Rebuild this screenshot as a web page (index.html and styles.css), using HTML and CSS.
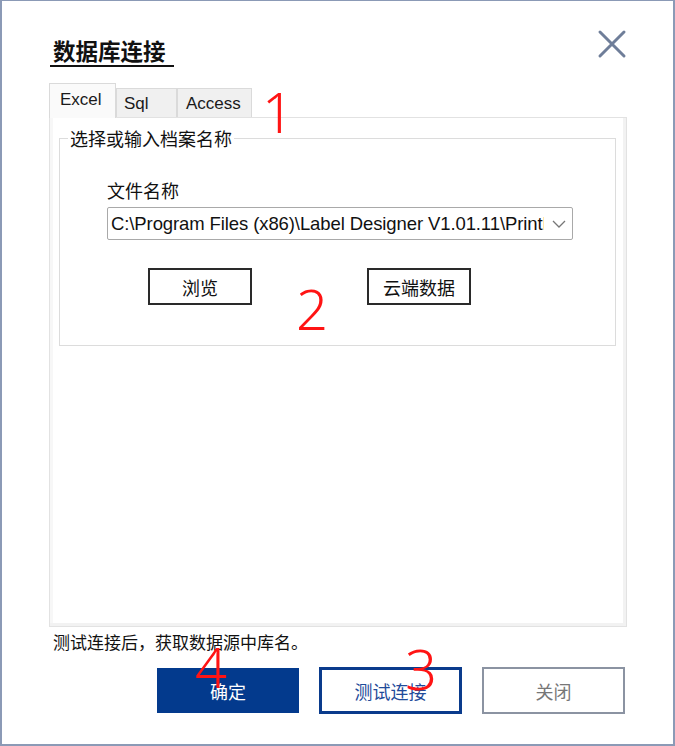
FILE: index.html
```html
<!DOCTYPE html>
<html lang="zh-CN">
<head>
  <meta charset="UTF-8">
  <meta name="viewport" content="width=device-width, initial-scale=1.0">
  <title>数据库连接</title>
  <link rel="stylesheet" href="styles.css">
</head>
<body>
  <div class="window">
    <div class="header">
      <div class="title">数据库连接</div>
      <svg class="close" width="30" height="30" viewBox="0 0 30 30">
        <path d="M3 3 L27 27 M27 3 L3 27" />
      </svg>
    </div>

    <div class="tabs">
      <div class="tab active">Excel</div>
      <div class="tab tab-sql">Sql</div>
      <div class="tab tab-access">Access</div>
    </div>

    <div class="panel">
      <fieldset class="group">
        <legend>选择或输入档案名称</legend>
        <div class="group-body">
          <div class="field-label">文件名称</div>
          <div class="combo">
            <span class="combo-text">C:\Program Files (x86)\Label Designer V1.01.11\PrintFiles\data.xlsx</span>
            <svg class="chevron" width="14" height="8" viewBox="0 0 14 8">
              <path d="M1 1 L7 7 L13 1" />
            </svg>
          </div>
          <div class="group-buttons">
            <button class="btn-plain">浏览</button>
            <button class="btn-plain">云端数据</button>
          </div>
        </div>
      </fieldset>
    </div>

    <div class="status">测试连接后，获取数据源中库名。</div>

    <div class="footer">
      <button class="btn btn-primary">确定</button>
      <button class="btn btn-outline">测试连接</button>
      <button class="btn btn-disabled">关闭</button>
    </div>

    <!-- annotation marks -->
    <span class="mark mark-1">1</span>
    <span class="mark mark-2">2</span>
    <span class="mark mark-3">3</span>
    <span class="mark mark-4">4</span>
  </div>
</body>
</html>
```

FILE: styles.css
```css
body {
  margin: 0;
  background: #fff;
  font-family: "Liberation Sans", "Noto Sans CJK SC", sans-serif;
  color: #111;
}

.window {
  position: relative;
  width: 675px;
  height: 746px;
  box-sizing: border-box;
  border: 2px solid #8b9ab6;
  border-top-width: 1px;
  background: #fff;
  display: flex;
  flex-direction: column;
}

.header {
  display: flex;
  justify-content: space-between;
  align-items: flex-start;
  padding: 34px 48px 0 48px;
}

.title {
  font-family: "Noto Sans CJK SC", sans-serif;
  font-size: 22.5px;
  font-weight: 700;
  line-height: 30px;
  padding: 0 8px 0 3px;
  border-bottom: 2px solid #111;
}

.close {
  margin-top: -6px;
  margin-right: -2px;
}

.close path {
  stroke: #6f7e99;
  stroke-width: 3;
  stroke-linecap: round;
  fill: none;
}

/* Tabs */
.tabs {
  display: flex;
  align-items: flex-end;
  margin: 16px 46px 0 47px;
  position: relative;
  z-index: 1;
}

.tab {
  height: 29px;
  box-sizing: border-box;
  border: 1px solid #dadada;
  border-bottom: none;
  background: #f0f0f0;
  font-size: 17px;
  line-height: 30px;
  color: #1a1a1a;
  padding: 0 10px;
}

.tab.active {
  width: 67px;
  height: 35px;
  background: #fafafa;
  line-height: 32px;
  margin-bottom: -1px;
}

.tab-sql {
  width: 61px;
  padding-left: 7px;
}

.tab-access {
  width: 75px;
  padding-left: 8px;
}

/* Tab panel */
.panel {
  margin: 0 46px 0 47px;
  height: 510px;
  box-sizing: border-box;
  border: 1px solid #e2e2e2;
  box-shadow: inset -3px -3px 0 #f2f2f2, inset 3px 0 0 #f7f7f7;
  background: #fff;
  padding: 9px 10px 0 9px;
}

.group {
  margin: 0;
  padding: 0;
  border: 1px solid #dcdcdc;
  font-family: "Noto Sans CJK SC", sans-serif;
}

.group legend {
  margin-left: 8px;
  padding: 0 2px;
  font-size: 18px;
  line-height: 22px;
  color: #111;
}

.group-body {
  padding: 0 0 40px 47px;
}

.field-label {
  margin-top: 29px;
  font-size: 18px;
  line-height: 24px;
}

.combo {
  margin-top: 5px;
  width: 466px;
  height: 33px;
  box-sizing: border-box;
  border: 1px solid #a9a9a9;
  border-radius: 2px;
  display: flex;
  align-items: center;
  padding: 0 6px 0 3px;
  background: #fff;
}

.combo-text {
  flex: 1;
  overflow: hidden;
  white-space: nowrap;
  font-family: "Liberation Sans", sans-serif;
  font-size: 18.5px;
  letter-spacing: -0.1px;
  color: #111;
  margin-right: 8px;
}

.chevron {
  flex: none;
}

.chevron path {
  stroke: #777;
  stroke-width: 1.3;
  fill: none;
}

.group-buttons {
  display: flex;
  gap: 115px;
  margin-top: 28px;
  padding-left: 41px;
}

.btn-plain {
  width: 104px;
  height: 37px;
  border: 2px solid #2a2a2a;
  background: #fff;
  font-family: "Noto Sans CJK SC", sans-serif;
  font-size: 18px;
  color: #111;
  padding: 0;
}

/* Status + footer */
.status {
  margin: 2px 0 0 51px;
  font-family: "Noto Sans CJK SC", sans-serif;
  font-size: 17px;
  line-height: 26px;
}

.footer {
  display: flex;
  justify-content: flex-end;
  gap: 20px;
  margin: 12px 48px 0 0;
}

.btn {
  width: 142px;
  height: 47px;
  box-sizing: border-box;
  font-family: "Noto Sans CJK SC", sans-serif;
  font-size: 18px;
  padding: 0;
  background: #fff;
}

.btn-primary {
  background: #033a8d;
  border: none;
  color: #fff;
  height: 45px;
  margin-top: 1px;
}

.btn-outline {
  border: 3px solid #0a3b8c;
  color: #1f4b9a;
  width: 143px;
}

.btn-disabled {
  border: 2px solid #8b93a2;
  color: #777;
  width: 143px;
}

/* Red annotation marks */
.mark {
  position: absolute;
  font-family: "Noto Sans", sans-serif;
  font-weight: 300;
  font-size: 56px;
  line-height: 56px;
  color: #ff1414;
}

.mark-1 { left: 260px; top: 82px; }
.mark-2 { left: 294px; top: 279px; }
.mark-3 { left: 403px; top: 639px; }
.mark-4 { left: 193px; top: 637px; }
```
